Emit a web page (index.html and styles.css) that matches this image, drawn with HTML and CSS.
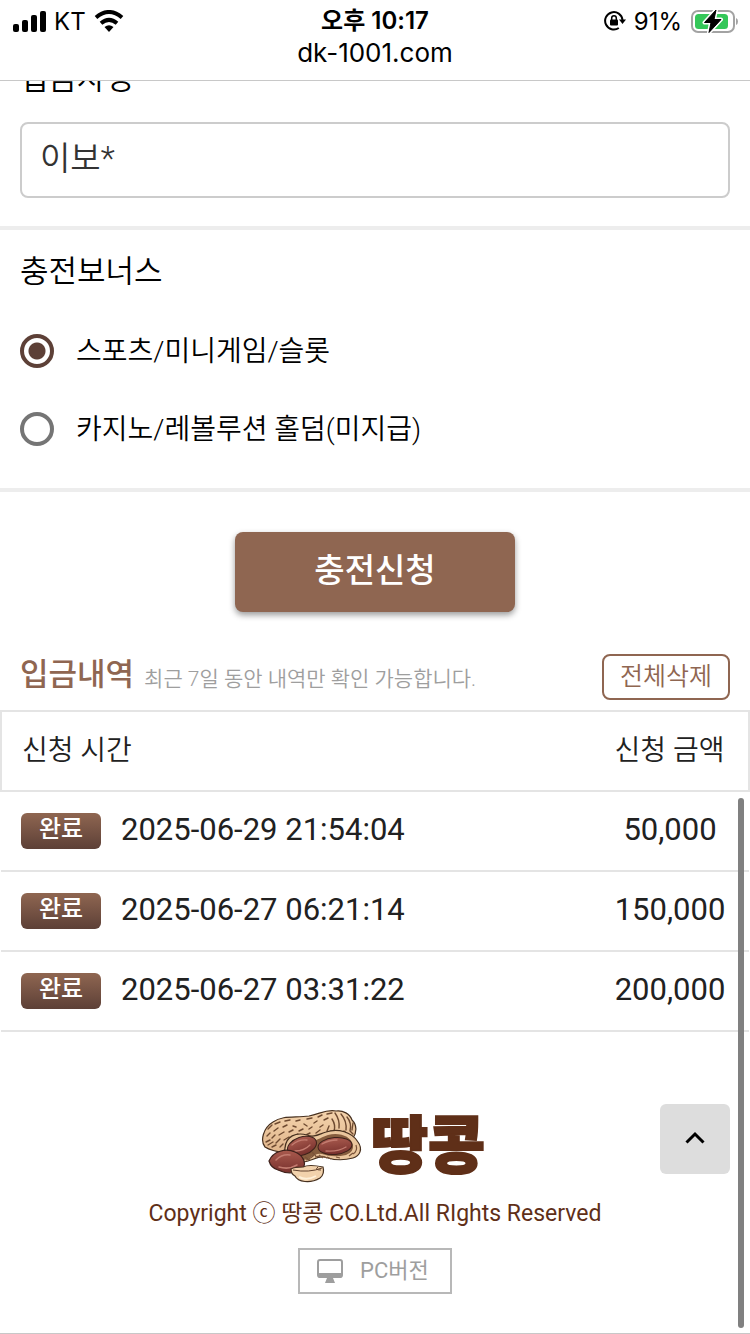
FILE: index.html
```html
<!DOCTYPE html>
<html lang="ko">
<head>
  <meta charset="UTF-8">
  <meta name="viewport" content="width=device-width, initial-scale=1">
  <title>땅콩</title>
  <link rel="stylesheet" href="styles.css">
</head>
<body>
  <header class="top-bar">
    <div class="status">
      <div class="status-left">
        <svg width="34" height="22" viewBox="0 0 34 22" aria-hidden="true">
          <rect x="1" y="14" width="6" height="8" rx="2"/>
          <rect x="10" y="10" width="6" height="12" rx="2"/>
          <rect x="19" y="5" width="6" height="17" rx="2"/>
          <rect x="28" y="1" width="6" height="21" rx="2"/>
        </svg>
        <span>KT</span>
        <svg class="wifi" width="30" height="22" viewBox="0 0 30 22" aria-hidden="true">
          <path d="M2 7.5Q15-3.5 28 7.5" fill="none" stroke="#000" stroke-width="4"/>
          <path d="M7 13.2Q15 6.5 23 13.2" fill="none" stroke="#000" stroke-width="4"/>
          <path d="M10.5 17Q15 13.6 19.5 17L15 22Z"/>
        </svg>
      </div>
      <div class="status-time">오후 10:17</div>
      <div class="status-right">
        <svg width="22" height="20" viewBox="0 0 22 20" aria-hidden="true">
          <path d="M14.8 17A8.7 8.7 0 1 1 18.5 9" fill="none" stroke="#000" stroke-width="2"/>
          <path d="M15 8.5H22L18.5 13Z"/>
          <rect x="6" y="8.5" width="8" height="6" rx="1"/>
          <path d="M7.7 9V7a2.3 2.3 0 0 1 4.6 0v2" fill="none" stroke="#000" stroke-width="1.5"/>
        </svg>
        <span>91%</span>
        <svg width="48" height="26" viewBox="0 0 48 26" aria-hidden="true">
          <rect x="2" y="3" width="42" height="21" rx="6" fill="none" stroke="#a3a3a3" stroke-width="2"/>
          <path d="M46 10q2 .8 2 3.500t-2 3.500z" fill="#a3a3a3"/>
          <rect x="5" y="6" width="33" height="15" rx="3.500" fill="#34c759"/>
          <path d="M26 2 14.500 14.500H21L19 24.500 31 11.500H24Z" stroke="#fff" stroke-width="4" stroke-linejoin="round"/>
          <path d="M26 2 14.500 14.500H21L19 24.500 31 11.500H24Z" stroke="#000" stroke-linejoin="round"/>
        </svg>
      </div>
    </div>
    <div class="address">dk-1001.com</div>
  </header>

  <main>
    <form class="deposit-form">
      <div class="name-field">
        <label for="sender">입금자명</label>
        <input type="text" id="sender" value="이보*">
      </div>
      <fieldset class="bonus">
        <legend>충전보너스</legend>
        <label class="option">
          <input type="radio" name="bonus" checked>
          <span>스포츠/미니게임/슬롯</span>
        </label>
        <label class="option">
          <input type="radio" name="bonus">
          <span>카지노/레볼루션 홀덤(미지급)</span>
        </label>
      </fieldset>
      <div class="submit-row">
        <button type="button" class="submit-btn">충전신청</button>
      </div>
    </form>

    <section class="history">
      <div class="history-head">
        <h2>입금내역</h2>
        <p>최근 7일 동안 내역만 확인 가능합니다.</p>
        <button type="button" class="delete-btn">전체삭제</button>
      </div>
      <table>
        <thead>
          <tr><th>신청 시간</th><th class="amount">신청 금액</th></tr>
        </thead>
        <tbody>
          <tr>
            <td><div class="entry"><span class="badge">완료</span><time>2025-06-29 21:54:04</time></div></td>
            <td class="amount">50,000</td>
          </tr>
          <tr>
            <td><div class="entry"><span class="badge">완료</span><time>2025-06-27 06:21:14</time></div></td>
            <td class="amount">150,000</td>
          </tr>
          <tr>
            <td><div class="entry"><span class="badge">완료</span><time>2025-06-27 03:31:22</time></div></td>
            <td class="amount">200,000</td>
          </tr>
        </tbody>
      </table>
    </section>
  </main>

  <footer>
    <div class="logo">
      <svg width="102" height="76" viewBox="0 0 102 76" aria-hidden="true">
        <defs>
          <linearGradient id="shell" x1="0" y1="0" x2="0" y2="1">
            <stop offset="0" stop-color="#f4d3ac"/>
            <stop offset="1" stop-color="#dfb48a"/>
          </linearGradient>
          <linearGradient id="nut" x1="0" y1="0" x2="0" y2="1">
            <stop offset="0" stop-color="#a95a4e"/>
            <stop offset="1" stop-color="#78312d"/>
          </linearGradient>
        </defs>
        <!-- closed half of the shell -->
        <path d="M4 38C-1 32 2 19 12 13C22 6 34 9 48 7C59 5 65 0 75 2C82 1 89 5 91 11C96 16 96 23 92 29L88 35L60 36L25 44Q10 42 4 38Z" fill="url(#shell)" stroke="#46301f" stroke-width="1.200"/>
        <g fill="none" stroke="#6e4a31" stroke-width="1.400" stroke-linecap="round">
          <path d="M7 20l4-4M14 15l5-2M24 12l5-1M35 12l4-1M46 10l5-1M57 8l4-2M66 5l5-1M6 27l3-3M13 22l4-3M22 18l4-2M32 17l3 1M43 15l3 2M53 14l3-2M63 11l4-2"/>
          <path d="M5 33l4-2M11 29l3-3M18 26l5-3M28 23l4-2M38 22l4-2M48 20l3-2M59 18l3-2M7 36l5-3M15 34l4-4M23 31l5-3M33 27l4-2M45 26l4-2M55 24l4-3M66 22l2-5M11 38l4-2M19 38l3-3"/>
          <path d="M74 4q5 7 4 15M80 5q6 7 5 16M86 8q5 6 3 14M71 10q4 6 2 12M77 22l5 4M83 22l5 4M89 22l3 3M70 22l3 3M92 14l-1 7"/>
        </g>
        <!-- open half -->
        <path d="M24 39C25 27 35 23 46 26C53 29 58 25 65 23C77 19 91 23 97 33C102 40 99 47 92 49C81 52 72 51 63 48C56 47 51 52 43 53L29 50Q22 45 24 39Z" fill="#eac69d" stroke="#46301f" stroke-width="1.200"/>
        <path d="M28 41C29 31 38 28 48 30C54 34 60 28 67 26C78 23 90 27 92 36Q93 43 85 46Q72 49 61 45Q55 44 47 50Q34 54 28 41Z" fill="#865d3e"/>
        <path d="M45 51q6-2 9-6M54 48q7-2 12 1M92 45q5-3 3-9M44 48l5 3M51 43l4 4M58 46l4 3M66 48l4 2M75 48l4 1M88 47l4-3" fill="none" stroke="#795238" stroke-width="1.200"/>
        <ellipse cx="41" cy="37" rx="15" ry="9" transform="rotate(-19 41 37)" fill="url(#nut)" stroke="#3e211b"/>
        <ellipse cx="74" cy="37" rx="17" ry="8.500" transform="rotate(-5 74 37)" fill="url(#nut)" stroke="#3e211b"/>
        <path d="M31 36q7-6 15-5M61 35q7-4 15-4M34 42q9 0 15-6M65 42q12 1 20-4" fill="none" stroke="#c37c70" stroke-width="1.300" stroke-linecap="round"/>
        <!-- loose nuts -->
        <path d="M8 52C12 42 25 39 34 43C41 46 46 53 42 59C37 65 25 65 17 61Q10 59 8 52Z" fill="url(#nut)" stroke="#3e211b" stroke-width="1.200"/>
        <path d="M15 51q6-6 14-5M18 58q10 3 18-2" fill="none" stroke="#c37c70" stroke-width="1.500" stroke-linecap="round"/>
        <path d="M30 60Q33 58 42 58Q48 55 62 58Q64 65 59 69C49 75 37 73 34 67Q30 65 30 60Z" fill="#f2d2ac" stroke="#46301f" stroke-width="1.200"/>
        <path d="M32 61Q48 64 61 59M57 58q-4 3 3 3" fill="none" stroke="#60402c"/>
        <path d="M38 68q8 4 17-1" fill="none" stroke="#fff0d8" stroke-width="2"/>
      </svg>
      <strong>땅콩</strong>
    </div>
    <p class="copyright">Copyright ⓒ 땅콩 CO.Ltd.All RIghts Reserved</p>
    <a href="#" class="pc-link">
      <svg width="26" height="26" viewBox="0 0 26 26" aria-hidden="true">
        <rect x="1" y="2" width="24" height="17" rx="2" fill="none" stroke="#9e9e9e" stroke-width="2"/>
        <path d="M1 15H25V18Q25 20 23 20H16L18 25H8L10 20H3Q1 20 1 18Z" fill="#9e9e9e"/>
      </svg>
      <span>PC버전</span>
    </a>
  </footer>

  <button type="button" class="go-top" aria-label="맨 위로">
    <svg width="20" height="16" viewBox="0 0 20 16" aria-hidden="true">
      <path d="M1.500 11.500 10 3l8.500 8.500" fill="none" stroke="#000" stroke-width="3"/>
    </svg>
  </button>
  <div class="scroll-thumb"></div>
</body>
</html>
```

FILE: styles.css
```css
* {
  box-sizing: border-box;
}
body {
  margin: 0;
  min-height: 100vh;
  display: flex;
  flex-direction: column;
  background: #fff;
  color: #000;
  font-family: Roboto, 'Noto Sans CJK KR', sans-serif;
  font-weight: 350;
  font-size: 28px;
  border-bottom: 1px solid #c8c8c8;
}
button, input {
  font-family: inherit;
  font-weight: inherit;
}
h2, p {
  margin: 0;
}
svg {
  flex: none;
}

/* status bar */
.top-bar {
  position: sticky;
  top: 0;
  z-index: 2;
  height: 81px;
  padding: 4px 12px 0;
  background: #fff;
  border-bottom: 1px solid #c8c8c8;
  font-family: Inter, 'Noto Sans CJK KR', sans-serif;
  font-weight: 400;
}
.status {
  display: grid;
  grid-template-columns: 1fr auto 1fr;
  align-items: center;
  height: 32px;
  font-size: 24px;
}
.status-left, .status-right {
  display: flex;
  align-items: center;
  gap: 8px;
}
.status-right {
  justify-content: flex-end;
}
.status-time {
  font-weight: 600;
  line-height: 34px;
}
.address {
  text-align: center;
  font-size: 26px;
  line-height: 34px;
}

/* deposit form */
.name-field {
  margin-top: -20px;
  padding: 0 20px 28px;
  border-bottom: 4px solid #ededed;
}
.name-field label {
  display: block;
  height: 61px;
  font-size: 31px;
  line-height: 36px;
}
.name-field input {
  display: block;
  width: 100%;
  height: 76px;
  padding: 0 18px 8px;
  border: 2px solid #ccc;
  border-radius: 8px;
  background: #fff;
  color: #333;
  font-size: 33px;
}
.bonus {
  margin: 0;
  padding: 0 20px 20px;
  border: 0;
  border-bottom: 4px solid #ededed;
}
.bonus legend {
  padding: 22px 0 20px;
  font-size: 31px;
  line-height: 40px;
}
.option {
  display: flex;
  align-items: center;
  gap: 22px;
  height: 78px;
}
.option input {
  appearance: none;
  width: 34px;
  height: 34px;
  margin: 0;
  border: 4px solid #757575;
  border-radius: 50%;
}
.option input:checked {
  border-color: #5d4037;
  background: radial-gradient(circle, #5d4037 8px, #fff 9px);
}
.option span {
  padding-bottom: 4px;
}
.submit-row {
  padding: 40px 20px 42px;
  text-align: center;
}
.submit-btn {
  display: block;
  width: 280px;
  height: 80px;
  margin: 0 auto;
  padding: 0 0 8px;
  border: 0;
  border-radius: 8px;
  background: #8f6651;
  color: #fff;
  font-size: 33px;
  font-weight: 500;
  box-shadow: 0 3px 6px rgba(0, 0, 0, 0.4);
}

/* history */
.history-head {
  display: flex;
  align-items: center;
  gap: 10px;
  padding: 0 20px 10px;
}
.history-head h2 {
  padding-bottom: 4px;
  color: #8f6651;
  font-size: 31px;
  font-weight: 500;
  line-height: 42px;
}
.history-head p {
  color: #9e9e9e;
  font-size: 21px;
}
.delete-btn {
  width: 128px;
  height: 46px;
  margin-left: auto;
  padding: 0 0 6px;
  border: 2px solid #8f6651;
  border-radius: 8px;
  background: #fff;
  color: #8f6651;
  font-size: 25px;
}
table {
  width: 100%;
  border-collapse: collapse;
  color: #212121;
}
thead {
  border: 2px solid #e4e4e4;
}
tbody tr {
  border-bottom: 2px solid #e4e4e4;
}
th, td {
  height: 80px;
  padding: 0 0 6px 20px;
  text-align: left;
  font-weight: inherit;
}
td {
  padding: 0 0 0 20px;
  font-size: 31px;
  font-weight: 400;
}
.amount {
  width: 158px;
  padding-left: 0;
  text-align: center;
}
td.amount {
  padding-bottom: 4px;
}
.entry {
  display: flex;
  align-items: center;
  gap: 20px;
}
.entry time {
  padding-bottom: 4px;
}
.badge {
  width: 80px;
  height: 36px;
  border-radius: 6px;
  background: linear-gradient(#8f6651, #5d4037);
  color: #fff;
  font-size: 24px;
  font-weight: 500;
  line-height: 32px;
  text-align: center;
}

/* footer */
footer {
  display: flex;
  flex-direction: column;
  align-items: center;
  padding: 76px 20px 39px;
  color: #5f2f18;
}
.logo {
  display: flex;
  align-items: center;
  gap: 8px;
  padding-right: 4px;
}
.logo strong {
  font-size: 62px;
  font-weight: 900;
  line-height: 78px;
  -webkit-text-stroke: 2px #5f2f18;
}
.copyright {
  margin: 10px 0 16px;
  font-size: 23px;
  font-weight: 400;
  line-height: 36px;
}
.pc-link {
  display: flex;
  align-items: center;
  gap: 17px;
  width: 154px;
  height: 46px;
  padding: 0 17px;
  border: 2px solid #b8b8b8;
  color: #9e9e9e;
  font-size: 22px;
  font-weight: 400;
  text-decoration: none;
}
.pc-link span {
  padding-bottom: 6px;
}
.go-top {
  position: fixed;
  right: 20px;
  bottom: 160px;
  display: grid;
  place-items: center;
  width: 70px;
  height: 70px;
  padding: 0;
  border: 0;
  border-radius: 6px;
  background: #ddd;
}
.scroll-thumb {
  position: fixed;
  top: 798px;
  right: 6px;
  bottom: 6px;
  width: 6px;
  border-radius: 3px;
  background: #808080;
}
```
